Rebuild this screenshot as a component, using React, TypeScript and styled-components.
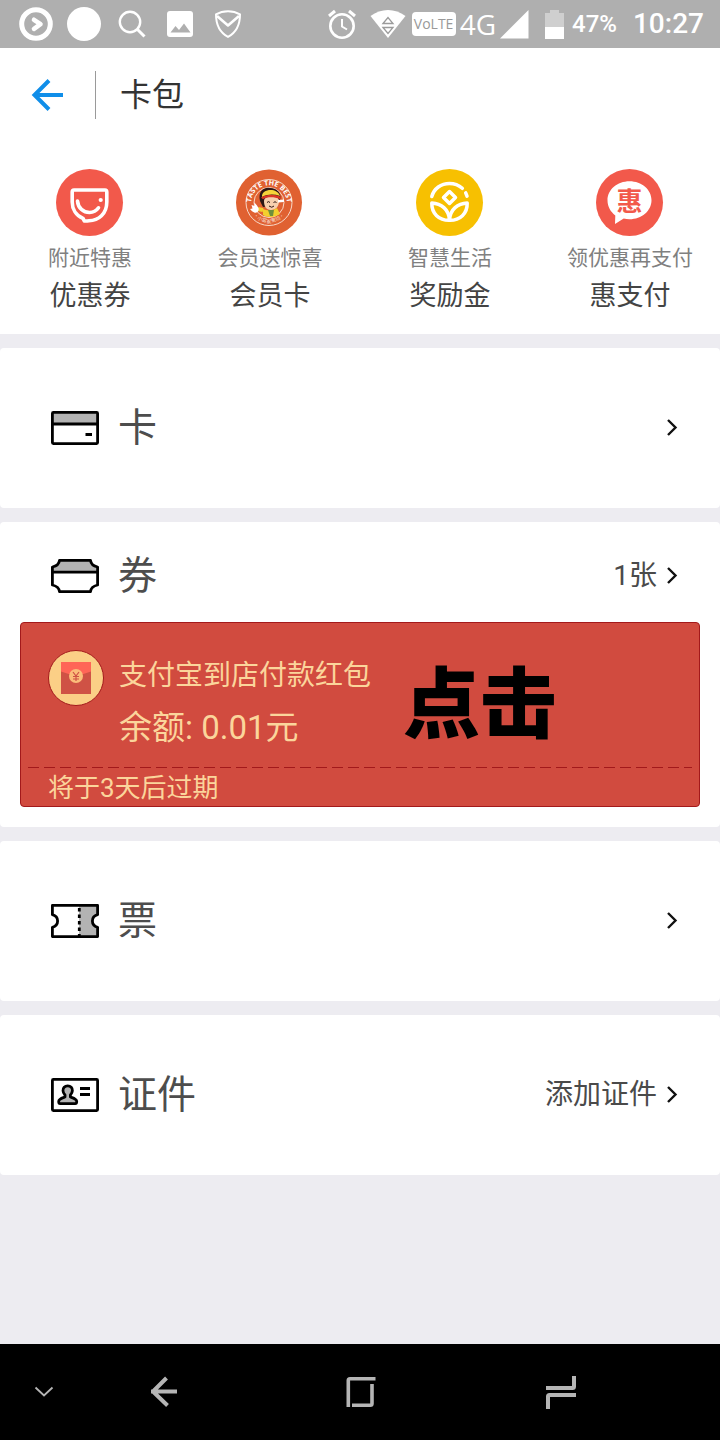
import React from "react";
import styled, { createGlobalStyle } from "styled-components";

const Global = createGlobalStyle`
  *, *::before, *::after { box-sizing: border-box; }
  body {
    margin: 0;
    background: #edecf1;
    color: #4a4a4a;
    font-family: Roboto, "Noto Sans CJK SC", sans-serif;
  }
  button {
    margin: 0;
    padding: 0;
    border: 0;
    background: none;
    color: inherit;
    font: inherit;
    cursor: pointer;
  }
  a { color: inherit; text-decoration: none; }
  h1, h2, p { margin: 0; font-weight: 400; }
  svg { display: block; flex: none; }
`;

const Page = styled.div`
  display: flex;
  flex-direction: column;
  min-height: 100vh;
`;

const StatusBar = styled.div`
  display: flex;
  align-items: center;
  justify-content: space-between;
  height: 48px;
  padding: 0 16px 0 19px;
  background: #afafaf;
  color: #fff;
`;

const StatusGroup = styled.div<{ $gap: number }>`
  display: flex;
  align-items: center;
  gap: ${(p) => p.$gap}px;
`;

const StatusText = styled.span<{ $size: number }>`
  font-size: ${(p) => p.$size}px;
  line-height: 48px;
  font-weight: 500;
`;

const Network = styled.span`
  font: 28px/48px "Open Sans", sans-serif;
`;

const Volte = styled.span`
  width: 44px;
  border-radius: 4px;
  background: #fff;
  color: #999;
  font: 14px/24px "Open Sans", sans-serif;
  text-align: center;
`;

const Header = styled.header`
  display: flex;
  align-items: center;
  height: 94px;
  padding-left: 31px;
  background: #fff;
`;

const Title = styled.h1`
  margin-left: 32px;
  padding-left: 24px;
  border-left: 1px solid #9a9a9a;
  color: #333;
  font-size: 32px;
  line-height: 48px;
`;

const Shortcuts = styled.nav`
  display: grid;
  grid-template-columns: repeat(4, 1fr);
  padding: 27px 0 18px;
  background: #fff;
`;

const Shortcut = styled.a`
  display: flex;
  flex-direction: column;
  align-items: center;
  white-space: nowrap;
`;

const Caption = styled.span`
  margin-top: 6px;
  color: #808080;
  font-size: 21px;
  line-height: 32px;
`;

const ShortcutName = styled.span`
  margin-top: 2px;
  color: #444;
  font-size: 27px;
  line-height: 40px;
`;

const Sections = styled.main`
  display: flex;
  flex: 1;
  flex-direction: column;
  gap: 14px;
  padding: 14px 0;
`;

const Section = styled.section`
  border-radius: 4px;
  background: #fff;
`;

const Row = styled.button<{ $compact?: boolean }>`
  display: flex;
  align-items: center;
  width: 100%;
  height: ${(p) => (p.$compact ? 100 : 160)}px;
  padding: ${(p) => (p.$compact ? "8px" : "0")} 42px 0 51px;
  text-align: left;
`;

const RowName = styled.h2`
  flex: 1;
  margin-left: 19px;
  color: #4d4d4d;
  font-size: 39px;
  line-height: 56px;
`;

const RowNote = styled.span`
  margin-right: 9px;
  color: #4a4a4a;
  font-size: 28px;
  line-height: 40px;
`;

const Coupon = styled.a`
  display: block;
  margin: 0 20px;
  border: 1px solid #a3191b;
  border-radius: 4px;
  background: #d14b3f;
  color: #fbd59b;
`;

const CouponBody = styled.div`
  display: flex;
  align-items: flex-start;
  height: 144px;
  padding: 27px 27px 0;
`;

const CouponText = styled.div`
  margin-left: 15px;
  padding-top: 2px;
  white-space: nowrap;
`;

const CouponTitle = styled.p`
  font-size: 28px;
  line-height: 48px;
`;

const Balance = styled.p`
  font-size: 33px;
  line-height: 56px;
`;

const Callout = styled.strong`
  margin-left: 32px;
  color: #000;
  font-size: 77px;
  line-height: 112px;
  font-weight: 900;
  white-space: nowrap;
`;

const Perforation = styled.div`
  height: 1px;
  margin: 0 7px;
  background: repeating-linear-gradient(to right, #a3191b 0 11px, transparent 11px 16px);
`;

const Expiry = styled.p`
  height: 38px;
  padding-left: 27px;
  font-size: 26px;
  line-height: 40px;
`;

const CouponSection = styled(Section)`
  padding-bottom: 20px;
`;

const NavBar = styled.footer`
  display: grid;
  grid-template-columns: 88fr 152fr 242fr 158fr 80fr;
  height: 96px;
  background: #000;
`;

const NavButton = styled.button`
  display: flex;
  align-items: center;
  justify-content: center;
`;

const Chevron = () => (
  <svg width="12" height="18" viewBox="0 0 12 18" fill="none" stroke="#111" strokeWidth="2.4">
    <path d="M2 1 9.500 8.500 2 16" />
  </svg>
);

const StatusLeft = () => (
  <StatusGroup $gap={14}>
    <svg width="34" height="34" viewBox="0 0 34 34" fill="none" stroke="#fff">
      <circle cx="17" cy="17" r="14.3" strokeWidth="5" />
      <path d="m15 12.800 6.500 4.400L15 21.800" strokeWidth="4.600" strokeLinecap="round" strokeLinejoin="round" />
    </svg>
    <svg width="34" height="34" viewBox="0 0 34 34">
      <circle cx="17" cy="17" r="17" fill="#fff" />
    </svg>
    <svg width="34" height="34" viewBox="0 0 34 34" fill="none" stroke="#fff" strokeWidth="2.4">
      <circle cx="15" cy="15" r="10.2" />
      <path d="m22 22 7.5 7.5" strokeWidth="3" />
    </svg>
    <svg width="34" height="34" viewBox="0 0 34 34">
      <rect x="4" y="4" width="26" height="26" rx="3" fill="#fff" />
      <path d="m7.500 25.500 5-6.500 3.500 4 5-6.500 6.500 9Z" fill="#afafaf" />
    </svg>
    <svg width="34" height="34" viewBox="0 0 34 34" fill="none" stroke="#fff" strokeWidth="2" strokeLinejoin="round">
      <path d="M17 4.200c4 0 8.500 1.100 12 3.200 0 10-3 17.500-12 22.500C8 24.900 5 17.400 5 7.400c3.500-2.100 8-3.200 12-3.200Z" />
      <path d="m6 9 11 9.500L28 9" strokeWidth="2.600" />
    </svg>
  </StatusGroup>
);

const StatusRight = () => (
  <StatusGroup $gap={16}>
    <StatusGroup $gap={14}>
      <svg width="28" height="30" viewBox="0 0 28 30" fill="none" stroke="#fff" strokeWidth="2.6">
        <circle cx="14" cy="17" r="11.700" />
        <path d="M14 10v7.500l5 3" strokeWidth="2" />
        <path d="m1 7 6-5M27 7l-6-5" strokeWidth="3" />
      </svg>
      <StatusGroup $gap={6}>
        <svg width="36" height="30" viewBox="0 0 36 30">
          <path d="M.5 7C11-1 25-1 35.500 7L18 29Z" fill="#fff" />
          <path d="m13 14.500 5-6 5 6ZM13 18.500l5 6 5-6Z" fill="none" stroke="#9b9b9b" strokeWidth="1.300" />
        </svg>
        <StatusGroup $gap={4}>
          <Volte>VoLTE</Volte>
          <Network>4G</Network>
          <svg width="29" height="29" viewBox="0 0 29 29">
            <path d="M0 28.500 28.500 0v28.500Z" fill="#fff" />
          </svg>
        </StatusGroup>
      </StatusGroup>
    </StatusGroup>
    <StatusGroup $gap={8}>
      <svg width="19" height="29" viewBox="0 0 19 29">
        <path d="M0 3h5V0h9v3h5v14H0Z" fill="#cfcfcf" />
        <path d="M0 17h19v12H0Z" fill="#fff" />
      </svg>
      <StatusText $size={24}>47%</StatusText>
    </StatusGroup>
    <StatusText $size={28}>10:27</StatusText>
  </StatusGroup>
);

const OfferIcon = () => (
  <svg width="68" height="67" viewBox="0 0 68 67" fill="none" stroke="#fff" strokeWidth="3.600" strokeLinecap="round" strokeLinejoin="round">
    <circle cx="33.500" cy="33.500" r="33.500" fill="#f2594b" stroke="none" />
    <path d="M18 21h31q1.800 0 1.800 2v10c0 12-8.300 18.600-17.800 18.800-1.500 0-3 .4-4.700.2L27 49.400C20 46.500 16.200 40 16.200 33V23q0-2 1.800-2Z" />
    <path d="M21.500 32c.5 7 6 11.500 12 11.500 3.700 0 6.800-1.600 9-4.700" />
    <circle cx="44.700" cy="31" r="2.100" fill="#fff" stroke="none" />
  </svg>
);

const MemberIcon = () => (
  <svg width="68" height="67" viewBox="0 0 68 67">
    <defs>
      <path id="member-top" d="M15.500 38.500A18 18 0 1 1 50.500 38.500" />
      <path id="member-bottom" d="M16 44.500A20.500 20.500 0 0 0 50 44.500" />
    </defs>
    <circle cx="33" cy="33.500" r="33" fill="#e06131" />
    <circle cx="33" cy="33.500" r="23" fill="none" stroke="#f8d9c8" strokeWidth="1" />
    <circle cx="33" cy="33.500" r="15" fill="none" stroke="#f8d9c8" strokeWidth="1" />
    <text fill="#fff" fontFamily="Open Sans, sans-serif" fontSize="7" fontWeight="700" textAnchor="middle">
      <textPath href="#member-top" startOffset="50%">TASTE THE BEST</textPath>
    </text>
    <text fill="#f8d9c8" fontFamily="Noto Sans CJK SC, sans-serif" fontSize="5" textAnchor="middle">
      <textPath href="#member-bottom" startOffset="50%">·小當家東坊·</textPath>
    </text>
    <path d="M24 32c-2-9 3-14 10-13 7 0 12 5 10 12l-3 5-14 2Z" fill="#2c1716" />
    <path d="M28 32c0-6 15-7 15 0 0 5-3 9-8 9s-7-4-7-9Z" fill="#f7cfae" />
    <path d="M26 28c-1-8 15-10 18-1-6-2-12-2-18 1Z" fill="#f6d43a" />
    <path d="M25 28.500c6-3.500 14-3.500 20-.5l-1 2.200c-6-2.500-12-2.500-17 0Z" fill="#d93524" />
    <path d="M31 33.500q1.500-1.800 3 0M37.500 33.500q1.500-1.500 3 0M33 37q3 2.500 5 0" fill="none" stroke="#2c1716" strokeWidth="1" />
    <path d="M27 40c4 2 10 2 14-1l3 6c-5 3.500-13 4-17 1Z" fill="#f3cf2e" />
    <path d="m32 41 2 6h3l1-6Z" fill="#6e8f3c" />
    <path d="m27 41-5-1" stroke="#f3cf2e" strokeWidth="4" />
    <path d="M15.500 36l3.500 1-1-4 2.800 3.200 1.700 2.800c1 3-2 5.500-4.200 4.500s-3-2-4.300-3.500l2.500-.5Z" fill="#fff" />
    <path d="m42 31 6-.5v2.500l-6 .5Z" fill="#fff" />
  </svg>
);

const RewardIcon = () => (
  <svg width="68" height="67" viewBox="0 0 68 67" fill="none" stroke="#fff" strokeWidth="3.500" strokeLinecap="round" strokeLinejoin="round">
    <circle cx="33.500" cy="33.500" r="33.500" fill="#f7c001" stroke="none" />
    <path d="M15.800 27.500C18 19.500 25 14.500 33.500 14.500c5 0 9.300 1.700 12.800 4.800M49.700 23.800l1.300 3.400" />
    <path d="m33.500 22.500 6 6-6 6-6-6Z" />
    <path d="M33.500 51.300C23 51.500 15.500 44.500 15.800 34c9.200.5 17.200 6 17.700 17.300Z" />
    <path d="M33.500 51.300C44 51.500 51.500 44.500 51.200 34c-9.200.5-17.200 6-17.700 17.300Z" />
  </svg>
);

const PayIcon = () => (
  <svg width="68" height="67" viewBox="0 0 68 67">
    <circle cx="33.500" cy="33.500" r="33.500" fill="#f2594b" />
    <path d="M33.500 12.300c12.200 0 22 8.400 22 19s-9.800 19-22 19c-2 0-4-.2-5.800-.7L19 55l.3-8.600c-4.800-3.500-7.800-9-7.800-15.100 0-10.600 9.800-19 22-19Z" fill="#fff" />
    <text x="33.500" y="42" fill="#f2594b" fontFamily="Noto Sans CJK SC, sans-serif" fontSize="26" fontWeight="700" textAnchor="middle">惠</text>
  </svg>
);

const rowSvg = {
  width: 48,
  height: 34,
  viewBox: "0 0 48 34",
  fill: "none",
  stroke: "#000",
  strokeWidth: 2.8,
  strokeLinejoin: "round" as const,
};

const CardIcon = () => (
  <svg {...rowSvg}>
    <path d="M1.500 1.500h45V13h-45Z" fill="#b3b3b3" stroke="none" />
    <rect x="1.400" y="1.400" width="45.200" height="31.200" rx="1" />
    <path d="M1.500 13h45M34.500 23.500h6.500" />
  </svg>
);

const VoucherIcon = () => (
  <svg {...rowSvg}>
    <path d="M8.500 1.400h31Q40 6.500 46.600 8v5H1.400V8Q8 6.500 8.500 1.400Z" fill="#b3b3b3" stroke="none" />
    <path d="M8.500 1.400h31Q40 6.500 46.600 8v18Q40 27.500 39.500 32.600h-31Q8 27.500 1.400 26V8Q8 6.500 8.500 1.400ZM1.400 13.200h45.200" />
  </svg>
);

const TicketIcon = () => (
  <svg {...rowSvg}>
    <path d="M28 1.400h18.600v9.300q-5.200 1.500-5.200 6.300t5.200 6.300v9.300H28Z" fill="#b3b3b3" stroke="none" />
    <path d="M1.400 1.400h45.200v9.300q-5.200 1.500-5.200 6.300t5.200 6.300v9.300H1.400v-9.300q5.200-1.500 5.200-6.300t-5.200-6.300Z" />
    <path d="M28.300 4v28" strokeDasharray="3.500 3" />
  </svg>
);

const IdIcon = () => (
  <svg {...rowSvg}>
    <rect x="1.400" y="1.400" width="45.200" height="31.200" rx="1" />
    <path d="M16.700 7.800c3 0 4.900 2 4.700 4.900-.1 2-1 3.200-2 4.300v2c3 1 6.300 1.700 6.300 4.500 0 1.500-.5 2.200-1.500 2.200H9.200c-1 0-1.500-.7-1.500-2.200 0-2.800 3.300-3.500 6.300-4.500v-2c-1-1.100-1.900-2.300-2-4.300-.2-2.900 1.700-4.900 4.700-4.900Z" fill="#b3b3b3" />
    <path d="M29 10.500h10M29 16.500h10" />
  </svg>
);

const EnvelopeIcon = () => (
  <svg width="56" height="56" viewBox="0 0 56 56">
    <circle cx="28" cy="28" r="27.500" fill="#fbcf86" stroke="#a3191b" />
    <path d="M13 12h30v32H13Z" fill="#cf5245" />
    <path d="M13 12h30v9.500Q28 28 13 21.500Z" fill="#ff6557" />
    <circle cx="28" cy="26" r="7" fill="#fbbd7a" />
    <path d="m25 22 3 4 3-4M28 26v5M25 26.500h6M25 29h6" fill="none" stroke="#cf5245" strokeWidth="1.200" />
  </svg>
);

const shortcuts = [
  { caption: "附近特惠", name: "优惠券", Icon: OfferIcon },
  { caption: "会员送惊喜", name: "会员卡", Icon: MemberIcon },
  { caption: "智慧生活", name: "奖励金", Icon: RewardIcon },
  { caption: "领优惠再支付", name: "惠支付", Icon: PayIcon },
];

export default function App() {
  return (
    <Page>
      <Global />
      <StatusBar>
        <StatusLeft />
        <StatusRight />
      </StatusBar>
      <Header>
        <button aria-label="返回">
          <svg width="32" height="32" viewBox="0 0 32 32" fill="none" stroke="#108ee9" strokeWidth="4">
            <path d="M18 1.500 3.500 16 18 30.500M3.500 16H32" />
          </svg>
        </button>
        <Title>卡包</Title>
      </Header>
      <Shortcuts>
        {shortcuts.map(({ caption, name, Icon }) => (
          <Shortcut href="#" key={name}>
            <Icon />
            <Caption>{caption}</Caption>
            <ShortcutName>{name}</ShortcutName>
          </Shortcut>
        ))}
      </Shortcuts>
      <Sections>
        <Section>
          <Row>
            <CardIcon />
            <RowName>卡</RowName>
            <Chevron />
          </Row>
        </Section>
        <CouponSection>
          <Row $compact>
            <VoucherIcon />
            <RowName>券</RowName>
            <RowNote>1张</RowNote>
            <Chevron />
          </Row>
          <Coupon href="#">
            <CouponBody>
              <EnvelopeIcon />
              <CouponText>
                <CouponTitle>支付宝到店付款红包</CouponTitle>
                <Balance>余额: 0.01元</Balance>
              </CouponText>
              <Callout>点击</Callout>
            </CouponBody>
            <Perforation />
            <Expiry>将于3天后过期</Expiry>
          </Coupon>
        </CouponSection>
        <Section>
          <Row>
            <TicketIcon />
            <RowName>票</RowName>
            <Chevron />
          </Row>
        </Section>
        <Section>
          <Row>
            <IdIcon />
            <RowName>证件</RowName>
            <RowNote>添加证件</RowNote>
            <Chevron />
          </Row>
        </Section>
      </Sections>
      <NavBar>
        <NavButton aria-label="收起">
          <svg width="20" height="12" viewBox="0 0 20 12" fill="none" stroke="#b5b5b5" strokeWidth="1.800">
            <path d="m1.500 1.500 8.500 8 8.500-8" />
          </svg>
        </NavButton>
        <NavButton aria-label="后退">
          <svg width="28" height="32" viewBox="0 0 28 32" fill="none" stroke="#b5b5b5" strokeWidth="4">
            <path d="M16.500 2 3 15.500M3.500 16l14 13.500M1 15.500h26" />
          </svg>
        </NavButton>
        <NavButton aria-label="主屏幕">
          <svg width="30" height="32" viewBox="0 0 30 32" fill="none" stroke="#b5b5b5" strokeWidth="3.600">
            <path d="M2.300 31V4.500q0-1.700 1.700-1.700h25.500M26 8v19.500q0 1.700-1.700 1.700H6" />
          </svg>
        </NavButton>
        <NavButton aria-label="最近任务">
          <svg width="32" height="34" viewBox="0 0 32 34" fill="none" stroke="#b5b5b5" strokeWidth="4">
            <path d="M29 1v10.500q0 1.500-1.500 1.500H1M3 34V21.500Q3 20 4.500 20H31" />
          </svg>
        </NavButton>
      </NavBar>
    </Page>
  );
}
